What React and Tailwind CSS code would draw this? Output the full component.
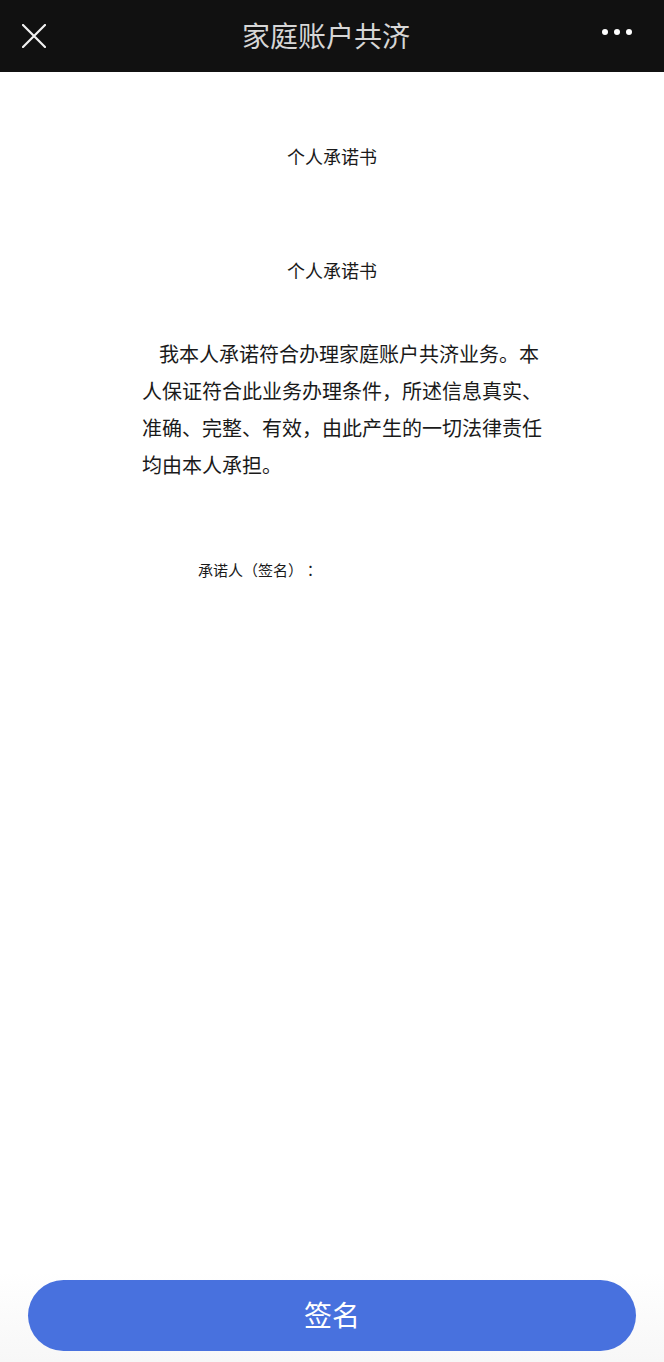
const cjk = { fontFamily: '"Noto Sans CJK SC", "Noto Sans", sans-serif' };

const Mid = ({ children }) => (
  <span className="[font-family:'Noto_Sans_CJK_TC',sans-serif]">{children}</span>
);

const App = () => {
  return (
    <div className="w-[664px] h-[1362px] bg-white flex flex-col overflow-hidden [text-spacing-trim:space-all]" style={cjk}>
      <div className="h-[72px] bg-[#111111] flex items-center justify-between px-[22px] shrink-0">
        <svg width="24" height="24" viewBox="0 0 24 24" className="-mt-[1px]">
          <path d="M1 1 L23 23 M23 1 L1 23" stroke="#f2f2f2" strokeWidth="2.2" strokeLinecap="round" />
        </svg>
        <div className="text-[28px] text-[#d6d6d6] leading-none -mt-[3px] ml-[4px]">家庭账户共济</div>
        <div className="flex items-center gap-[6px] pr-[10px] -mt-[8px]">
          <span className="w-[6px] h-[6px] rounded-full bg-white" />
          <span className="w-[6px] h-[6px] rounded-full bg-white" />
          <span className="w-[6px] h-[6px] rounded-full bg-white" />
        </div>
      </div>

      <div className="flex-1 flex flex-col">
        <div className="pt-[71px] text-center text-[18px] text-[#1a1a1a] leading-[26px]">个人承诺书</div>
        <div className="pt-[88px] text-center text-[18px] text-[#1a1a1a] leading-[26px]">个人承诺书</div>
        <p className="mt-[52px] ml-[142px] w-[404px] text-[20px] leading-[37px] text-[#1a1a1a] indent-[17px]">
          我本人承诺符合办理家庭账户共济业务。本人保证符合此业务办理条件，所述信息真实、准确、完整、有效，由此产生的一切法律责任均由本人承担。
        </p>
        <div className="mt-[76px] ml-[198px] text-[15px] leading-[22px] text-[#1a1a1a]">
          承诺人（签名）<Mid>：</Mid>
        </div>
      </div>

      <div className="bg-gradient-to-b from-white to-[#f7f7f7] px-[28px] pb-[11px] pt-[8px]">
        <button className="w-full h-[71px] rounded-full bg-[#4871de] text-white text-[28px] leading-none pb-[4px]">
          签名
        </button>
      </div>
    </div>
  );
};

export default App;
